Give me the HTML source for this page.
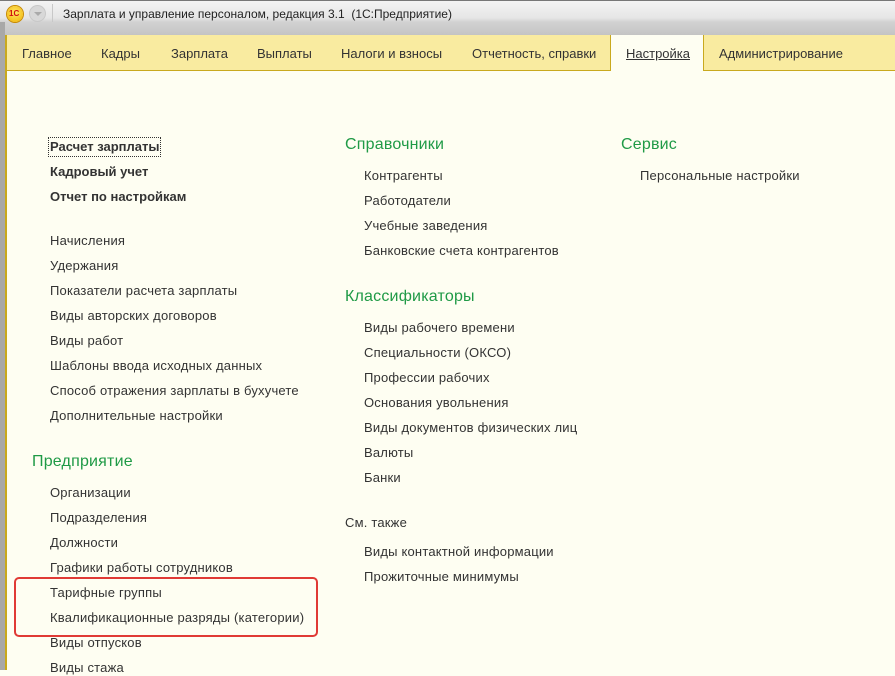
<!DOCTYPE html>
<html><head><meta charset="utf-8"><style>
*{margin:0;padding:0}
body{width:895px;height:670px;overflow:hidden;position:relative;background:#fefef2;font-family:"Liberation Sans","DejaVu Sans",sans-serif;color:#333}
.t{position:absolute;white-space:nowrap;font-size:13px;line-height:16px;letter-spacing:0.2px}
.h{position:absolute;white-space:nowrap;font-size:16px;line-height:20px;color:#1f9a46;letter-spacing:0.2px}
.b{font-weight:bold;letter-spacing:0}
#title{position:absolute;left:0;top:0;width:895px;height:35px;background:linear-gradient(#f4f4f4 0,#e6e6e6 18px,#d2d2d2 22px,#c4c4c4 35px)}
#menu{position:absolute;left:6px;top:35px;width:889px;height:35px;background:#f9eba0;border-bottom:1px solid #c9a91e}
#lb{position:absolute;left:0;top:22px;width:5px;height:648px;background:#a8a8a8}
#lb2{position:absolute;left:5px;top:35px;width:2px;height:635px;background:#c9a91e}
.m{position:absolute;top:46px;font-size:13px;line-height:16px;color:#333;white-space:nowrap}
</style></head><body>
<div id="title"></div>
<div style="position:absolute;left:0;top:0;width:895px;height:1px;background:#777"></div>
<div style="position:absolute;left:7px;top:6px;width:16px;height:16px;border-radius:50%;background:radial-gradient(circle at 50% 40%,#ffe866,#f0b000);box-shadow:0 0 0 1px #c88a00"></div>
<div style="position:absolute;left:9px;top:9px;font-size:8px;font-weight:bold;color:#d01010;line-height:10px">1С</div>
<div style="position:absolute;left:30px;top:6px;width:15px;height:15px;border-radius:50%;background:#d8d8d8;box-shadow:0 0 0 1px #c8c8c8"></div>
<div style="position:absolute;left:34px;top:12px;width:0;height:0;border-left:4px solid transparent;border-right:4px solid transparent;border-top:4px solid #aaa"></div>
<div style="position:absolute;left:52px;top:4px;width:1px;height:18px;background:#c8c8c8"></div>
<div class="t" style="left:63px;top:6px;font-size:12px;color:#222;letter-spacing:0">Зарплата и управление персоналом, редакция 3.1&nbsp; (1С:Предприятие)</div>
<div id="menu"></div>
<div id="lb"></div><div id="lb2"></div>
<div style="position:absolute;left:610px;top:35px;width:92px;height:36px;background:#fefef2;border-left:1px solid #c9a91e;border-right:1px solid #c9a91e"></div>
<div class="m" style="left:22px">Главное</div>
<div class="m" style="left:101px">Кадры</div>
<div class="m" style="left:171px">Зарплата</div>
<div class="m" style="left:257px">Выплаты</div>
<div class="m" style="left:341px">Налоги и взносы</div>
<div class="m" style="left:472px">Отчетность, справки</div>
<div class="m" style="left:626px;text-decoration:underline">Настройка</div>
<div class="m" style="left:719px">Администрирование</div>

<div class="t b" style="left:50px;top:139px;outline:1px dotted #333;outline-offset:1px">Расчет зарплаты</div>
<div class="t b" style="left:50px;top:164px">Кадровый учет</div>
<div class="t b" style="left:50px;top:189px">Отчет по настройкам</div>
<div class="t" style="left:50px;top:233px">Начисления</div>
<div class="t" style="left:50px;top:258px">Удержания</div>
<div class="t" style="left:50px;top:283px">Показатели расчета зарплаты</div>
<div class="t" style="left:50px;top:308px">Виды авторских договоров</div>
<div class="t" style="left:50px;top:333px">Виды работ</div>
<div class="t" style="left:50px;top:358px">Шаблоны ввода исходных данных</div>
<div class="t" style="left:50px;top:383px">Способ отражения зарплаты в бухучете</div>
<div class="t" style="left:50px;top:408px">Дополнительные настройки</div>
<div class="h" style="left:32px;top:452px">Предприятие</div>
<div class="t" style="left:50px;top:485px">Организации</div>
<div class="t" style="left:50px;top:510px">Подразделения</div>
<div class="t" style="left:50px;top:535px">Должности</div>
<div class="t" style="left:50px;top:560px">Графики работы сотрудников</div>
<div class="t" style="left:50px;top:585px">Тарифные группы</div>
<div class="t" style="left:50px;top:610px">Квалификационные разряды (категории)</div>
<div class="t" style="left:50px;top:635px">Виды отпусков</div>
<div class="t" style="left:50px;top:660px">Виды стажа</div>
<div style="position:absolute;left:14px;top:577px;width:300px;height:56px;border:2px solid #e03a35;border-radius:5px"></div>

<div class="h" style="left:345px;top:135px">Справочники</div>
<div class="t" style="left:364px;top:168px">Контрагенты</div>
<div class="t" style="left:364px;top:193px">Работодатели</div>
<div class="t" style="left:364px;top:218px">Учебные заведения</div>
<div class="t" style="left:364px;top:243px">Банковские счета контрагентов</div>
<div class="h" style="left:345px;top:287px">Классификаторы</div>
<div class="t" style="left:364px;top:320px">Виды рабочего времени</div>
<div class="t" style="left:364px;top:345px">Специальности (ОКСО)</div>
<div class="t" style="left:364px;top:370px">Профессии рабочих</div>
<div class="t" style="left:364px;top:395px">Основания увольнения</div>
<div class="t" style="left:364px;top:420px">Виды документов физических лиц</div>
<div class="t" style="left:364px;top:445px">Валюты</div>
<div class="t" style="left:364px;top:470px">Банки</div>
<div class="t" style="left:345px;top:515px">См. также</div>
<div class="t" style="left:364px;top:544px">Виды контактной информации</div>
<div class="t" style="left:364px;top:569px">Прожиточные минимумы</div>

<div class="h" style="left:621px;top:135px">Сервис</div>
<div class="t" style="left:640px;top:168px">Персональные настройки</div>
</body></html>
